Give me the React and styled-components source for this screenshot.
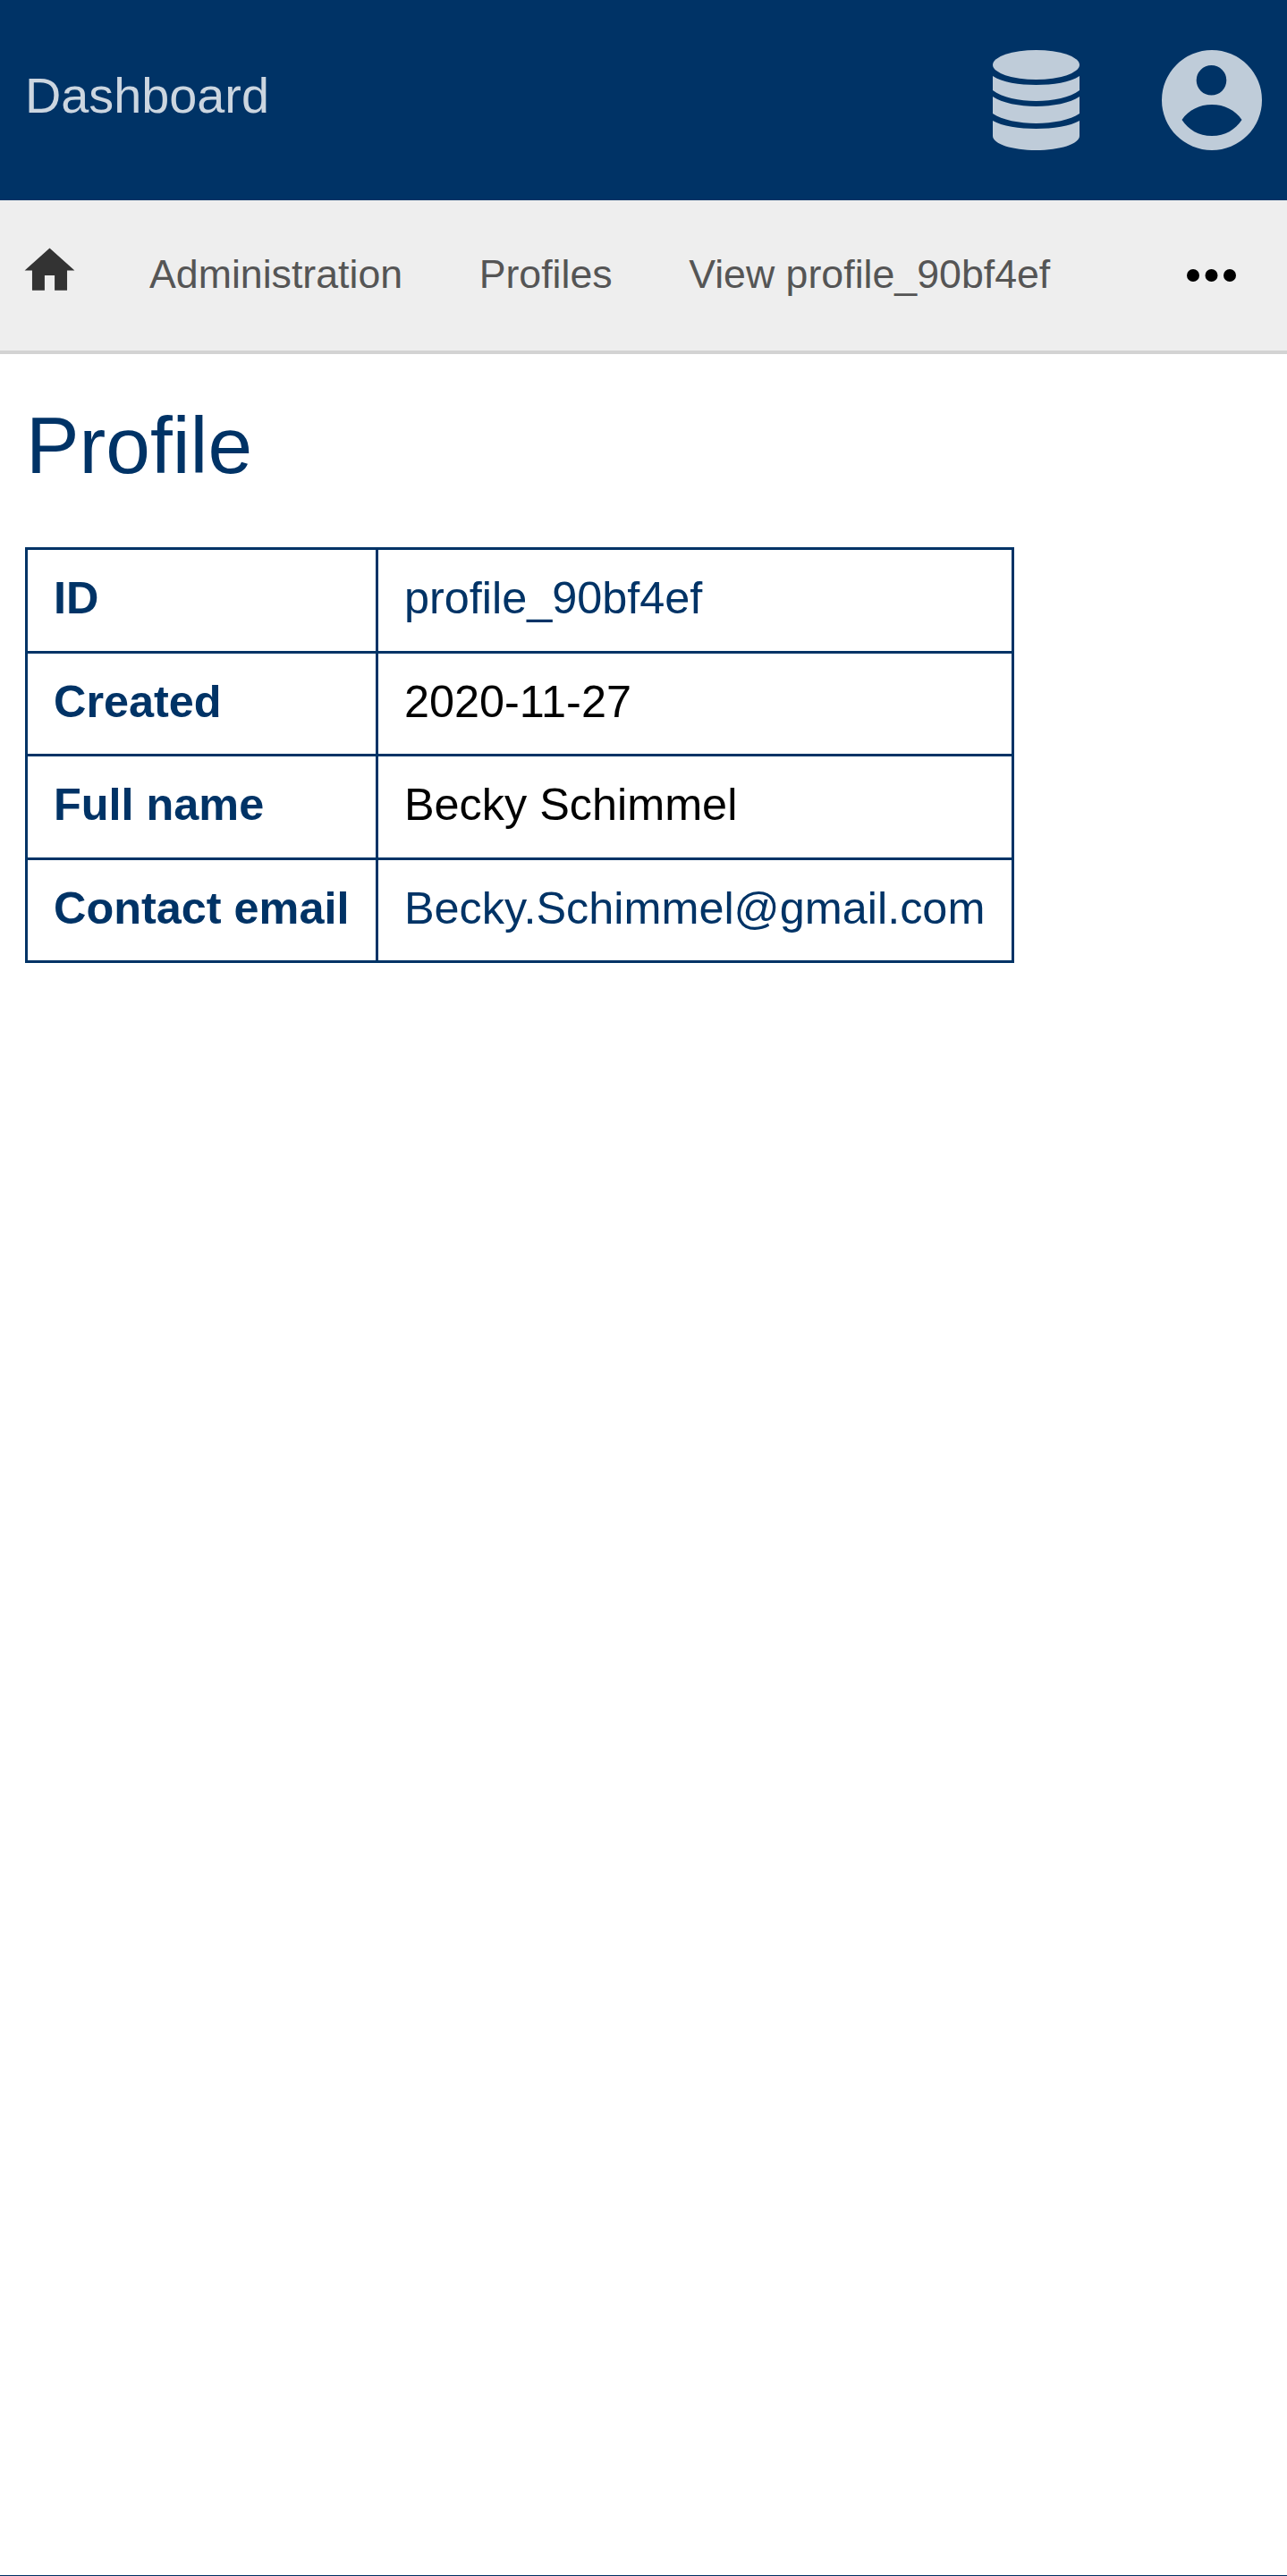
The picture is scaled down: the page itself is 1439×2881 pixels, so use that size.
import React from "react";
import styled, { createGlobalStyle } from "styled-components";
import { MdHome } from "react-icons/md";

const Global = createGlobalStyle`
  html, body { margin: 0; padding: 0; background: #fff; }
  body { font-family: "Liberation Sans", Arial, sans-serif; }
`;

const Page = styled.div`
  min-height: 100vh;
  display: flex;
  flex-direction: column;
  box-sizing: border-box;
  border-bottom: 1px solid #003366;
`;

const TopBar = styled.header`
  height: 224px;
  background: #003366;
  display: flex;
  align-items: center;
  padding: 0 28px 0 29px;
  flex: none;
`;

const Brand = styled.a`
  font-size: 55.8px;
  line-height: 64px;
  color: #ccd6e0;
  margin: -10px auto 0 -1px;
`;

const TopIcons = styled.div`
  display: flex;
  align-items: center;
  gap: 92px;
  color: #bfccd9;
`;

const Crumbs = styled.nav`
  height: 168px;
  background: #eeeeee;
  border-bottom: 4px solid #d3d3d3;
  display: flex;
  align-items: center;
  padding: 0 57px 0 28px;
  flex: none;
`;

const HomeLink = styled.a`
  display: flex;
  color: #333333;
  margin: -11px 84px 0 0;
`;

const Crumb = styled.a`
  font-size: 44.7px;
  line-height: 52px;
  color: #555555;
  margin: -2px 85.5px 0 0;
`;

const More = styled.button`
  margin: 0 0 0 auto;
  padding: 0;
  border: 0;
  background: none;
  display: flex;
  color: #000;
`;

const Main = styled.main`
  padding: 0 28px;
`;

const Title = styled.h1`
  font-size: 89.3px;
  line-height: 102px;
  font-weight: 400;
  color: #003366;
  margin: 51px 0 63px 1px;
`;

const Table = styled.table`
  border-collapse: collapse;
  font-size: 50.4px;
  line-height: 57px;
`;

const Head = styled.th`
  border: 3px solid #003366;
  height: 107.500px;
  padding: 0 29.5px 5px 29px;
  text-align: left;
  color: #003366;
  font-weight: 700;
`;

const Cell = styled.td`
  border: 3px solid #003366;
  height: 107.500px;
  padding: 0 30px 5px 29px;
  color: ${(p) => (p.$link ? "#003366" : "#000")};
`;

const rows = [
  ["ID", "profile_90bf4ef", true],
  ["Created", "2020-11-27", false],
  ["Full name", "Becky Schimmel", false],
  ["Contact email", "Becky.Schimmel@gmail.com", true],
];

export default function App() {
  return (
    <Page>
      <Global />
      <TopBar>
        <Brand>Dashboard</Brand>
        <TopIcons>
          <svg width="97" height="112" viewBox="0 0 97 112" aria-label="Data" fill="currentColor">
            <ellipse cx="48.500" cy="16.500" rx="48.500" ry="16.500" />
            <path d="M0 29C10 36 30 39 48.500 39C67 39 87 36 97 29V45C87 53 67 57 48.500 57C30 57 10 53 0 45Z" />
            <path d="M0 52C10 59 30 63 48.500 63C67 63 87 59 97 52V71C87 78 67 82 48.500 82C30 82 10 78 0 71Z" />
            <path d="M0 79C10 85 30 88 48.500 88C67 88 87 85 97 79V96C97 105 75 112 48.500 112C22 112 0 105 0 96Z" />
          </svg>
          <svg width="112" height="112" viewBox="0 0 112 112" aria-label="Account">
            <path
              fill="currentColor"
              fillRule="evenodd"
              d="M56 0a56 56 0 1 0 0 112a56 56 0 1 0 0-112ZM55.500 17a16.800 16.800 0 1 1 0 33.600a16.800 16.800 0 1 1 0-33.600ZM56 61C70 61 82 67 89.500 78C82 89 71 96 56 96C41 96 30 89 22.500 78C30 67 42 61 56 61Z"
            />
          </svg>
        </TopIcons>
      </TopBar>
      <Crumbs>
        <HomeLink>
          <MdHome size={67} style={{ margin: "-8px -6px -8px -6px" }} />
        </HomeLink>
        <Crumb>Administration</Crumb>
        <Crumb>Profiles</Crumb>
        <Crumb>View profile_90bf4ef</Crumb>
        <More aria-label="More">
          <svg width="55" height="14" viewBox="0 0 55 14">
            <circle cx="7" cy="7" r="7" fill="currentColor" />
            <circle cx="27.500" cy="7" r="7" fill="currentColor" />
            <circle cx="48" cy="7" r="7" fill="currentColor" />
          </svg>
        </More>
      </Crumbs>
      <Main>
        <Title>Profile</Title>
        <Table>
          <tbody>
            {rows.map(([k, v, link]) => (
              <tr key={k}>
                <Head>{k}</Head>
                <Cell $link={link}>{v}</Cell>
              </tr>
            ))}
          </tbody>
        </Table>
      </Main>
    </Page>
  );
}
